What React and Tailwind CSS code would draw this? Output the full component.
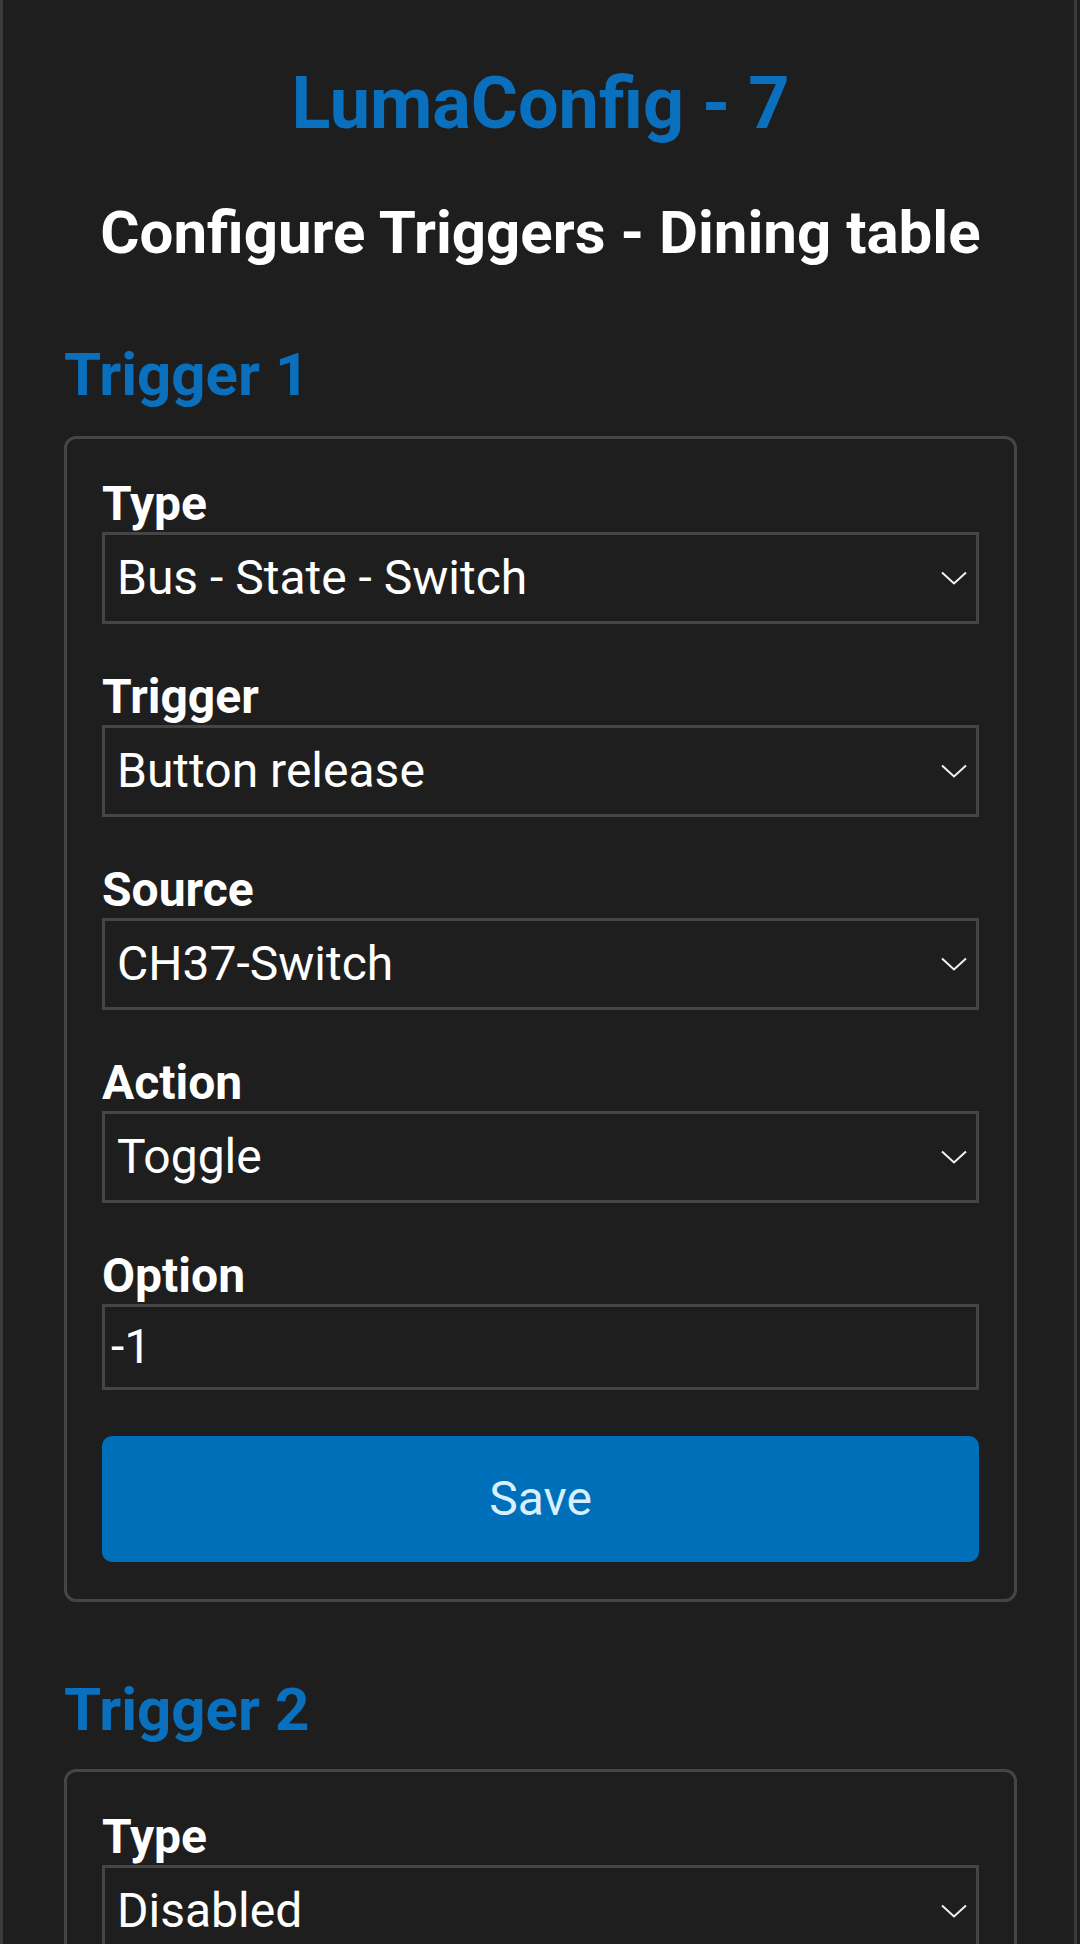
import React from "react";

const font = { fontFamily: "Roboto, 'Noto Sans', Arial, sans-serif" };

function Chevron() {
  return (
    <svg width="26" height="14" viewBox="0 0 26 14" fill="none" className="shrink-0">
      <path d="M1 1.5 L13 12.5 L25 1.5" stroke="#f2f2f2" strokeWidth="2" />
    </svg>
  );
}

function Field({ label, value, first, kind = "select" }) {
  return (
    <div className={first ? "" : "mt-[49px]"}>
      <div className="text-[48px] leading-none font-bold text-white">{label}</div>
      {kind === "select" ? (
        <div className="mt-[4px] h-[92px] border-[3px] border-[#454545] bg-[#1e1e1e] flex items-center justify-between pl-[12px] pr-[9px]">
          <span className="text-[48px] leading-none text-white">{value}</span>
          <Chevron />
        </div>
      ) : (
        <div className="mt-[4px] h-[86px] border-[3px] border-[#454545] bg-[#1e1e1e] flex items-center pl-[6px]">
          <span className="text-[48px] leading-none text-white">{value}</span>
        </div>
      )}
    </div>
  );
}

function TriggerCard({ n, fields, save, top, gap }) {
  return (
    <section>
      <h3 className={`${top} text-[60px] leading-none font-bold text-[#0a70bd]`}>Trigger {n}</h3>
      <div className={`${gap} border-[3px] border-[#454545] rounded-[12px] px-[35px] pt-[41px] pb-[37px]`}>
        {fields.map((f, i) => (
          <Field key={f.label} first={i === 0} {...f} />
        ))}
        {save && (
          <button className="mt-[46px] w-full h-[126px] rounded-[10px] bg-[#006fba] text-[48px] leading-none text-[#d8efff]">
            Save
          </button>
        )}
      </div>
    </section>
  );
}

export default function App() {
  return (
    <div style={font} className="w-[1080px] h-[1944px] overflow-hidden bg-[#1e1e1e]">
      <div className="w-[1077px] min-h-full border-x-[3px] border-[#3b3b3b] pl-[61px] pr-[57px]">
        <h1 className="pt-[68px] text-center text-[72px] leading-none font-bold text-[#0a70bd]">
          LumaConfig - 7
        </h1>
        <h2 className="mt-[63px] text-center text-[60px] leading-none font-bold text-white">
          Configure Triggers - Dining table
        </h2>

        <TriggerCard
          n={1}
          save
          top="mt-[82px]"
          gap="mt-[31px]"
          fields={[
            { label: "Type", value: "Bus - State - Switch" },
            { label: "Trigger", value: "Button release" },
            { label: "Source", value: "CH37-Switch" },
            { label: "Action", value: "Toggle" },
            { label: "Option", value: "-1", kind: "input" },
          ]}
        />
        <TriggerCard
          n={2}
          top="mt-[78px]"
          gap="mt-[29px]"
          fields={[{ label: "Type", value: "Disabled" }]}
        />
      </div>
    </div>
  );
}
